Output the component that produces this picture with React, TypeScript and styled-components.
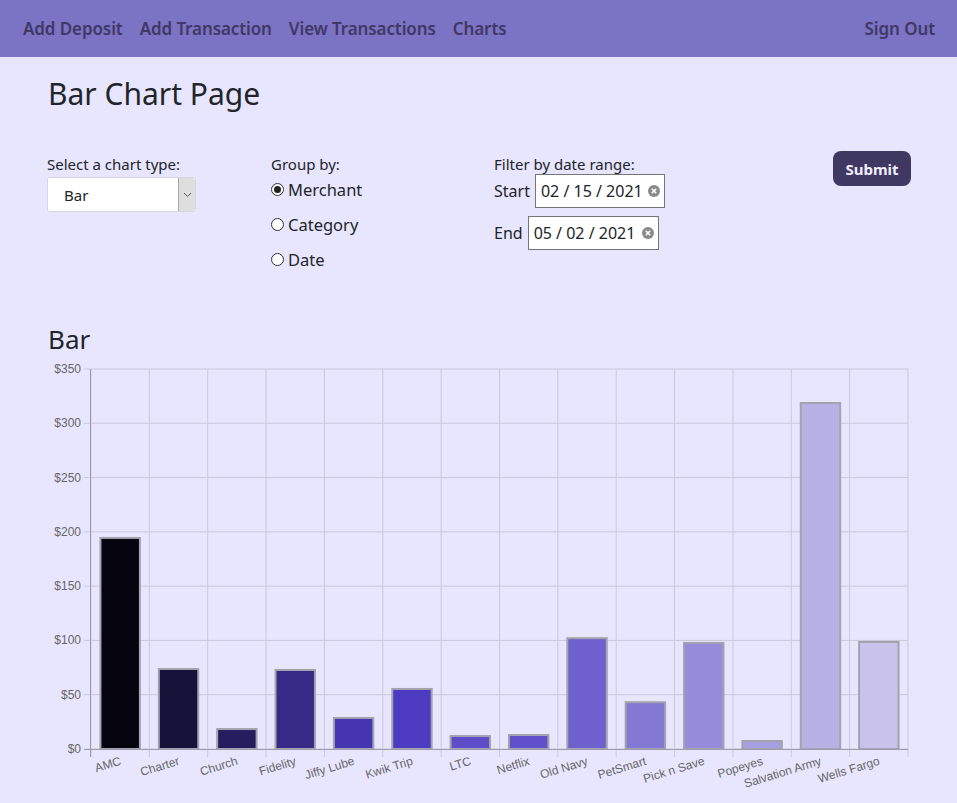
import React from "react";
import styled, { createGlobalStyle } from "styled-components";

const GlobalStyle = createGlobalStyle`
  body {
    margin: 0;
    background: #e8e6fe;
    font-family: "Noto Sans", "Open Sans", sans-serif;
    color: #212529;
  }
`;

type BarDatum = { name: string; value: number; color: string };

const data: BarDatum[] = [
  { name: "AMC", value: 195.3, color: "#05040f" },
  { name: "Charter", value: 74.6, color: "#16123a" },
  { name: "Church", value: 19.3, color: "#251d5e" },
  { name: "Fidelity", value: 73.7, color: "#382b87" },
  { name: "Jiffy Lube", value: 29.5, color: "#4535b0" },
  { name: "Kwik Trip", value: 56.2, color: "#4d3cc2" },
  { name: "LTC", value: 12.9, color: "#5d4dc8" },
  { name: "Netflix", value: 13.8, color: "#6051ca" },
  { name: "Old Navy", value: 103, color: "#6f61cd" },
  { name: "PetSmart", value: 44, color: "#8378d4" },
  { name: "Pick n Save", value: 98.6, color: "#968cdb" },
  { name: "Popeyes", value: 8.3, color: "#a59ee0" },
  { name: "Salvation Army", value: 319.6, color: "#b8b1e6" },
  { name: "Wells Fargo", value: 99.5, color: "#c9c3ec" },
];

const BarChart = () => {
  const width = 863;
  const height = 434;
  const left = 44;
  const right = 861;
  const top = 9;
  const bottom = 389;
  const max = 350;
  const step = (right - left) / data.length;
  const yFor = (v: number) => bottom - (v / max) * (bottom - top);
  const ticks = [0, 50, 100, 150, 200, 250, 300, 350];

  return (
    <ChartSvg width={width} height={height} viewBox={`0 0 ${width} ${height}`}>
      {ticks.map((t) => (
        <g key={t}>
          <line x1={left - 7} x2={right} y1={yFor(t)} y2={yFor(t)} stroke="#cbc8dc" />
          <text x={left - 10} y={yFor(t) + 4} textAnchor="end" className="tick">
            ${t}
          </text>
        </g>
      ))}
      {data.map((d, i) => (
        <line
          key={d.name}
          x1={left + i * step}
          x2={left + i * step}
          y1={top}
          y2={bottom + 8}
          stroke="#cbc8dc"
        />
      ))}
      <line x1={right} x2={right} y1={top} y2={bottom + 8} stroke="#cbc8dc" />
      {data.map((d, i) => {
        const cx = left + i * step + step / 2;
        const w = step * 0.71;
        const y = yFor(d.value);
        return (
          <rect
            key={d.name}
            x={cx - w / 2 + 1}
            y={y + 1}
            width={w - 2}
            height={bottom - y - 1}
            fill={d.color}
            stroke="#a3a2ad"
            strokeWidth={2}
          />
        );
      })}
      <line x1={left - 0.5} x2={left - 0.5} y1={top} y2={bottom + 8} stroke="#9d9bab" />
      <line x1={left - 7} x2={right} y1={bottom + 0.5} y2={bottom + 0.5} stroke="#9d9bab" />
      {data.map((d, i) => {
        const cx = left + i * step + step / 2;
        return (
          <text
            key={d.name}
            x={cx - 1}
            y={bottom + 7}
            textAnchor="end"
            dominantBaseline="hanging"
            transform={`rotate(-17 ${cx - 1} ${bottom + 7})`}
            className="tick"
          >
            {d.name}
          </text>
        );
      })}
    </ChartSvg>
  );
};

const App = () => {
  return (
    <>
      <GlobalStyle />
      <NavBar>
        <NavLinks>
          <NavLink>Add Deposit</NavLink>
          <NavLink>Add Transaction</NavLink>
          <NavLink>View Transactions</NavLink>
          <NavLink>Charts</NavLink>
        </NavLinks>
        <NavLink>Sign Out</NavLink>
      </NavBar>
      <Main>
        <PageTitle>Bar Chart Page</PageTitle>
        <FormRow>
          <Field>
            <FieldLabel>Select a chart type:</FieldLabel>
            <SelectBox>
              <span>Bar</span>
              <SelectArrow>
                <svg width="9" height="6" viewBox="0 0 9 6">
                  <path d="M1 1l3.5 3.5L8 1" fill="none" stroke="#555" strokeWidth="1" />
                </svg>
              </SelectArrow>
            </SelectBox>
          </Field>
          <Field>
            <FieldLabel>Group by:</FieldLabel>
            <RadioList>
              {["Merchant", "Category", "Date"].map((opt) => (
                <RadioRow key={opt}>
                  <RadioDot $checked={opt === "Merchant"} />
                  {opt}
                </RadioRow>
              ))}
            </RadioList>
          </Field>
          <Field>
            <FieldLabel>Filter by date range:</FieldLabel>
            <DateRow>
              Start
              <DateBox $width={130}>
                02 / 15 / 2021
                <ClearIcon />
              </DateBox>
            </DateRow>
            <DateRow>
              End
              <DateBox $width={131}>
                05 / 02 / 2021
                <ClearIcon />
              </DateBox>
            </DateRow>
          </Field>
          <SubmitButton>Submit</SubmitButton>
        </FormRow>
        <ChartTitle>Bar</ChartTitle>
        <BarChart />
      </Main>
    </>
  );
};

const ClearIcon = () => (
  <svg width="12" height="12" viewBox="0 0 12 12">
    <circle cx="6" cy="6" r="6" fill="#8a8a8a" />
    <path d="M3.8 3.8l4.4 4.4M8.2 3.8l-4.4 4.4" stroke="#fff" strokeWidth="1.6" />
  </svg>
);

export default App;

const NavBar = styled.nav`
  display: flex;
  justify-content: space-between;
  align-items: center;
  height: 57px;
  padding: 0 22px 0 23px;
  background: #7b73c3;
`;

const NavLinks = styled.div`
  display: flex;
  gap: 17px;
`;

const NavLink = styled.a`
  font-size: 17px;
  font-weight: 600;
  letter-spacing: -0.1px;
  color: #403866;
  cursor: pointer;
`;

const Main = styled.main`
  padding: 0 46px 0 47px;
`;

const PageTitle = styled.h1`
  margin: 18px 0 0 1px;
  font-size: 30px;
  line-height: 38px;
  font-weight: 400;
`;

const FormRow = styled.div`
  display: grid;
  grid-template-columns: 224px 223px 1fr auto;
  align-items: start;
  margin-top: 38px;
`;

const Field = styled.div`
  display: flex;
  flex-direction: column;
  align-items: flex-start;
`;

const FieldLabel = styled.label`
  font-size: 15px;
  line-height: 20px;
  margin-top: 3px;
`;

const SelectBox = styled.div`
  display: flex;
  align-items: stretch;
  width: 149px;
  height: 35px;
  margin-top: 3px;
  box-sizing: border-box;
  background: #fff;
  border: 1px solid #d6d6e0;
  border-radius: 3px;
  font-size: 15px;
  span {
    flex: 1;
    padding-left: 16px;
    display: flex;
    align-items: center;
  }
`;

const SelectArrow = styled.div`
  width: 16px;
  display: flex;
  align-items: center;
  justify-content: center;
  background: #dedede;
  border-left: 1px solid #a8a8a8;
  border-radius: 0 3px 3px 0;
`;

const RadioList = styled.div`
  display: flex;
  flex-direction: column;
  gap: 11px;
  margin-top: 3px;
`;

const RadioRow = styled.div`
  display: flex;
  align-items: center;
  gap: 4px;
  height: 24px;
  font-size: 16.5px;
`;

const RadioDot = styled.span<{ $checked: boolean }>`
  width: 13px;
  height: 13px;
  box-sizing: border-box;
  border: 1px solid #333;
  border-radius: 50%;
  background: #fff;
  display: flex;
  align-items: center;
  justify-content: center;
  &::after {
    content: "";
    width: 7px;
    height: 7px;
    border-radius: 50%;
    background: ${(p) => (p.$checked ? "#222" : "transparent")};
  }
`;

const DateRow = styled.div`
  display: flex;
  align-items: center;
  gap: 5px;
  font-size: 16px;
  & + & {
    margin-top: 8px;
  }
`;

const DateBox = styled.div<{ $width: number }>`
  display: flex;
  align-items: center;
  justify-content: space-between;
  width: ${(p) => p.$width}px;
  height: 34px;
  box-sizing: border-box;
  padding: 0 4px 0 5px;
  background: #fff;
  border: 1px solid #767676;
  font-size: 16px;
`;

const SubmitButton = styled.button`
  width: 78px;
  height: 35px;
  border: none;
  border-radius: 8px;
  background: #3f3862;
  color: #f0eeff;
  font-family: inherit;
  font-size: 15px;
  font-weight: 700;
  cursor: pointer;
`;

const ChartTitle = styled.h2`
  margin: 52px 0 0 1px;
  font-size: 26px;
  line-height: 32px;
  font-weight: 400;
`;

const ChartSvg = styled.svg`
  display: block;
  margin-top: 5px;
  .tick {
    font-family: "Liberation Sans", Arial, sans-serif;
    font-size: 12px;
    fill: #666;
  }
`;
